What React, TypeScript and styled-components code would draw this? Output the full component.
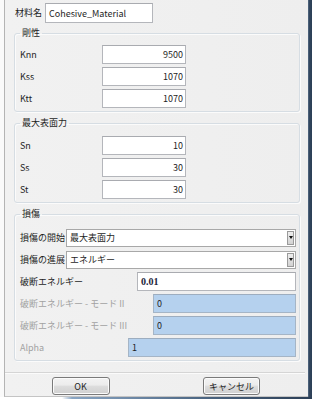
import styled, { createGlobalStyle } from "styled-components";

const GlobalStyle = createGlobalStyle`
  html, body {
    margin: 0;
    padding: 0;
  }
  body {
    width: 312px;
    height: 399px;
    overflow: hidden;
    background: #f0f0f0;
    font-family: "Noto Sans CJK JP", sans-serif;
    font-size: 9px;
    color: #1e1e1e;
  }
`;

const Frame = styled.div`
  width: 312px;
  height: 399px;
  display: flex;
  flex-direction: column;
`;

const FrameRow = styled.div`
  display: flex;
  height: 397px;
`;

const LeftGutter = styled.div`
  width: 4px;
  background: #fafafa;
`;

const RightEdge = styled.div`
  width: 4px;
  background: linear-gradient(to right, #5b718a 0, #33475f 30%, #2b3e55 100%);
`;

const BottomStrip = styled.div`
  height: 2px;
  background: linear-gradient(to right, #ffffff 0, #ffffff 62px, #8aa6c4 72px, #4d6784 200px, #2b3e55 100%);
`;

const Dialog = styled.div`
  flex: 1;
  display: flex;
  flex-direction: column;
  box-sizing: border-box;
  padding-top: 3px;
  background: linear-gradient(to right, #f1f1f1, #eeeeee);
  border-left: 1px solid #b4b4b4;
  border-bottom: 1px solid #c4c4c4;
`;

const NameRow = styled.div`
  display: flex;
  align-items: center;
  height: 20px;
  padding-left: 10px;
`;

const Label = styled.span<{ $w?: number; $disabled?: boolean }>`
  flex: none;
  width: ${(p) => (p.$w ? `${p.$w}px` : "auto")};
  line-height: 12px;
  white-space: nowrap;
  color: ${(p) => (p.$disabled ? "#a2a2a2" : "#1e1e1e")};
`;

const TextBox = styled.div<{ $w?: number; $h?: number; $align?: string; $disabled?: boolean }>`
  box-sizing: border-box;
  width: ${(p) => (p.$w ? `${p.$w}px` : "auto")};
  flex: ${(p) => (p.$w ? "none" : "1")};
  height: ${(p) => p.$h ?? 19}px;
  display: flex;
  align-items: center;
  justify-content: ${(p) => (p.$align === "right" ? "flex-end" : "flex-start")};
  padding: 0 2px 0 3px;
  background: ${(p) => (p.$disabled ? "#b5d1ee" : "#ffffff")};
  border: 1px solid ${(p) => (p.$disabled ? "#a5b5c6" : "#b4b6bb")};
  border-top-color: ${(p) => (p.$disabled ? "#9dadbf" : "#a9abb0")};
  color: #1e1e1e;
  white-space: nowrap;
`;

const StrongValue = styled.span`
  font-family: "Liberation Serif", serif;
  font-weight: bold;
  font-size: 10px;
  color: #1a1d3a;
`;

const Groups = styled.div`
  display: flex;
  flex-direction: column;
  gap: 5px;
  margin-top: 4px;
`;

const Group = styled.fieldset<{ $top?: number }>`
  margin: 0 0 0 9px;
  width: 286px;
  box-sizing: border-box;
  border: 1px solid #d6dde3;
  border-radius: 3px;
  box-shadow: inset 1px 1px 0 #fbfbfb, 1px 1px 0 #fbfbfb;
  padding: ${(p) => p.$top ?? 6}px 3px 3px 5px;
  display: flex;
  flex-direction: column;
  gap: 3px;
`;

const Legend = styled.legend`
  padding: 0 2px;
  line-height: 12px;
  color: #1e1e1e;
`;

const Row = styled.div<{ $h?: number }>`
  display: flex;
  align-items: center;
  height: ${(p) => p.$h ?? 19}px;
`;

const Combo = styled.div`
  box-sizing: border-box;
  flex: 1;
  height: 18px;
  display: flex;
  align-items: center;
  background: #ffffff;
  border: 1px solid #a8a8a8;
  padding-left: 3px;
`;

const ComboText = styled.span`
  flex: 1;
`;

const DropButton = styled.div`
  width: 7px;
  height: 14px;
  margin-right: 1px;
  box-sizing: border-box;
  border: 1px solid #9a9a9a;
  background: linear-gradient(#eeeeee, #d2d2d2);
  display: flex;
  align-items: center;
  justify-content: center;

  &::after {
    content: "";
    border-left: 2px solid transparent;
    border-right: 2px solid transparent;
    border-top: 3px solid #111;
  }
`;

const Separator = styled.div`
  margin: 11px 3px 0 0;
  border-top: 1px solid #d5d5d5;
  border-bottom: 1px solid #fbfbfb;
`;

const ButtonRow = styled.div`
  display: grid;
  grid-template-columns: 1fr 1fr;
  justify-items: center;
  margin-top: 3px;
  padding-right: 1px;
`;

const Button = styled.button<{ $w: number }>`
  width: ${(p) => p.$w}px;
  height: 18px;
  padding: 0;
  font-family: "Noto Sans CJK JP", sans-serif;
  font-size: 9px;
  color: #1e1e1e;
  border: 1px solid #7a7a7a;
  border-radius: 3px;
  background: linear-gradient(#f3f3f3 0, #ececec 45%, #dddddd 50%, #d0d0d0 100%);
  box-shadow: inset 0 0 0 1px #fbfbfb;
`;

const stiffness = [
  { name: "Knn", value: "9500" },
  { name: "Kss", value: "1070" },
  { name: "Ktt", value: "1070" },
];

const traction = [
  { name: "Sn", value: "10" },
  { name: "Ss", value: "30" },
  { name: "St", value: "30" },
];

function ValueGroup({ title, rows, top }: { title: string; rows: { name: string; value: string }[]; top: number }) {
  return (
    <Group $top={top}>
      <Legend>{title}</Legend>
      {rows.map((r) => (
        <Row key={r.name}>
          <Label $w={82}>{r.name}</Label>
          <TextBox $w={84} $align="right">
            {r.value}
          </TextBox>
        </Row>
      ))}
    </Group>
  );
}

export default function App() {
  return (
    <Frame>
      <GlobalStyle />
      <FrameRow>
        <LeftGutter />
        <Dialog>
          <NameRow>
            <Label $w={30}>材料名</Label>
            <TextBox $w={108} $h={20}>
              Cohesive_Material
            </TextBox>
          </NameRow>
          <Groups>
            <ValueGroup title="剛性" rows={stiffness} top={6} />
            <ValueGroup title="最大表面力" rows={traction} top={7} />
            <Group $top={8}>
              <Legend>損傷</Legend>
              <Row>
                <Label $w={46}>損傷の開始</Label>
                <Combo>
                  <ComboText>最大表面力</ComboText>
                  <DropButton />
                </Combo>
              </Row>
              <Row>
                <Label $w={46}>損傷の進展</Label>
                <Combo>
                  <ComboText>エネルギー</ComboText>
                  <DropButton />
                </Combo>
              </Row>
              <Row>
                <Label $w={117}>破断エネルギー</Label>
                <TextBox>
                  <StrongValue>0.01</StrongValue>
                </TextBox>
              </Row>
              <Row>
                <Label $w={133} $disabled>
                  破断エネルギー - モード II
                </Label>
                <TextBox $disabled>0</TextBox>
              </Row>
              <Row>
                <Label $w={133} $disabled>
                  破断エネルギー - モード III
                </Label>
                <TextBox $disabled>0</TextBox>
              </Row>
              <Row>
                <Label $w={108} $disabled>
                  Alpha
                </Label>
                <TextBox $disabled>1</TextBox>
              </Row>
            </Group>
          </Groups>
          <Separator />
          <ButtonRow>
            <Button $w={58}>OK</Button>
            <Button $w={57}>キャンセル</Button>
          </ButtonRow>
        </Dialog>
        <RightEdge />
      </FrameRow>
      <BottomStrip />
    </Frame>
  );
}
